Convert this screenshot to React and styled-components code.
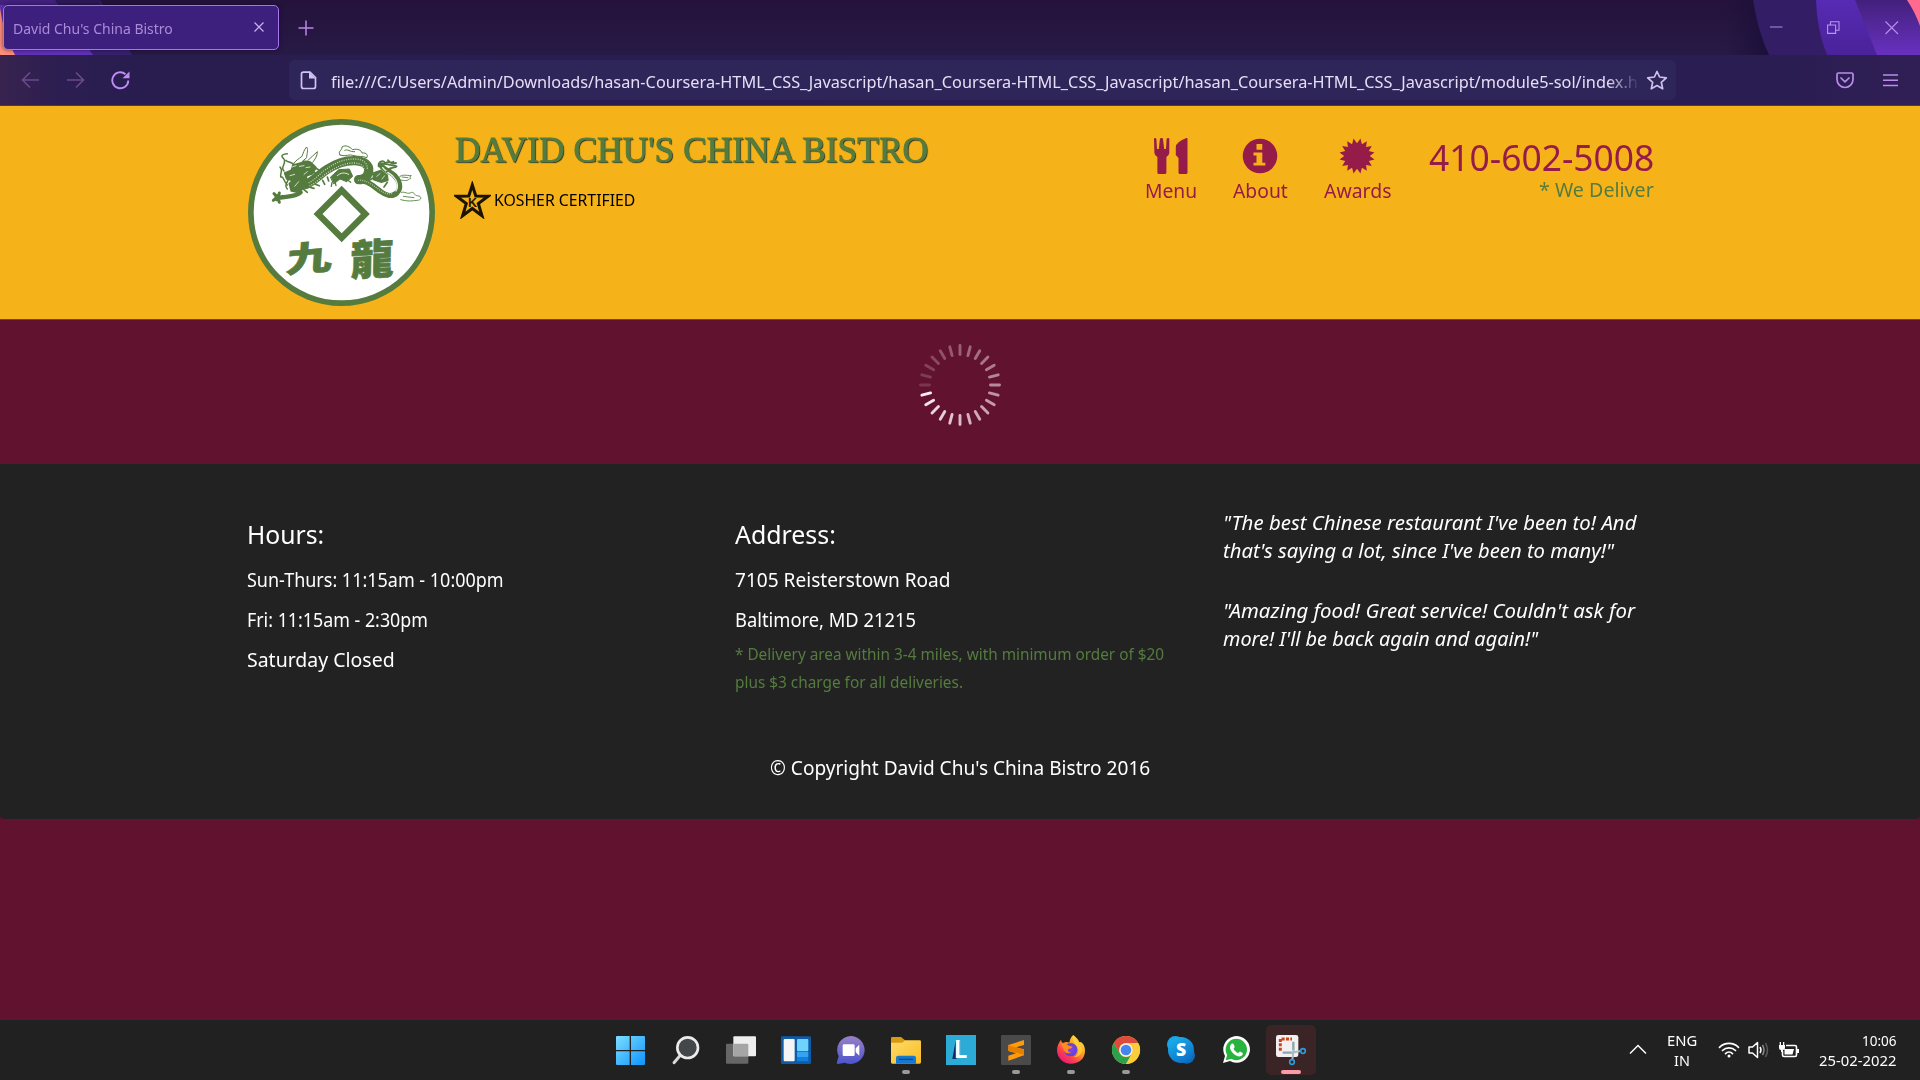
import React, { useLayoutEffect, useRef, useState } from "react";
import styled, { createGlobalStyle } from "styled-components";

const GlobalStyle = createGlobalStyle`
  * { box-sizing: border-box; }
  html, body { margin: 0; padding: 0; background: #61122f; }
  body { font-family: "Noto Sans", "Open Sans", sans-serif; overflow: hidden; }
  svg { display: block; }
`;

/* ---------- text set to a given measure ---------- */
const FitBox = styled.span`
  display: inline-block;
  flex: none;
  width: ${(p) => p.$w}px;
  white-space: nowrap;
`;
const FitText = styled.span`
  display: inline-block;
  transform-origin: 0 50%;
`;
function Fit({ w, children }) {
  const ref = useRef(null);
  const [k, setK] = useState(1);
  useLayoutEffect(() => {
    setK(w / ref.current.offsetWidth);
  }, [w]);
  return (
    <FitBox $w={w}>
      <FitText ref={ref} style={{ transform: `scaleX(${k})` }}>{children}</FitText>
    </FitBox>
  );
}

const Screen = styled.div`
  width: 1920px;
  height: 1080px;
  display: flex;
  flex-direction: column;
  background: #61122f;
  overflow: hidden;
`;

/* ---------- browser chrome ---------- */
const TitleBar = styled.div`
  position: relative;
  height: 55px;
  flex: none;
  display: flex;
  align-items: flex-start;
  padding: 5px 21px 0 3px;
  background: linear-gradient(#24123a, #271a46);
`;
const ThemeArt = styled.svg`
  position: absolute;
  top: 0;
  ${(p) => p.$side}: 0;
`;
const Tab = styled.div`
  position: relative;
  width: 276px;
  height: 45px;
  display: flex;
  align-items: center;
  justify-content: space-between;
  padding: 0 13px 0 9px;
  border: 1px solid #a775ea;
  border-radius: 5px;
  background: #3d207d;
  color: #ab8bd8;
  font-size: 15.3px;
  box-shadow: 0 0 4px rgba(15, 5, 40, 0.6);
`;
const TabClose = styled.svg`
  margin-bottom: 1px;
`;
const NewTab = styled.div`
  position: relative;
  margin: 15px 0 0 18.5px;
`;
const WindowButtons = styled.div`
  position: relative;
  display: flex;
  align-items: center;
  gap: 44px;
  height: 44px;
  margin-left: auto;
`;
const Toolbar = styled.div`
  height: 51px;
  flex: none;
  display: flex;
  align-items: center;
  padding: 0 21px;
  background: linear-gradient(90deg, #38234e 0, #2c1e51 60px, #291d50 130px, #2a1d52 1780px, #301f55 1920px);
  border-bottom: 1px solid #493a58;
`;
const NavButtons = styled.div`
  display: flex;
  gap: 26px;
  width: 268px;
`;
const UrlBar = styled.div`
  width: 1387px;
  height: 40px;
  display: flex;
  align-items: center;
  padding: 0 8px 0 11px;
  border-radius: 5px;
  background: #2e2559;
`;
const Url = styled.div`
  width: 1310px;
  margin: 0 auto 0 14px;
  padding-top: 4px;
  overflow: hidden;
  white-space: nowrap;
  font-size: 16.3px;
  line-height: 28px;
  color: #e6def6;
  mask-image: linear-gradient(90deg, #000 1276px, transparent 1309px);
`;
const ToolbarEnd = styled.div`
  display: flex;
  align-items: center;
  gap: 28px;
  margin-left: auto;
`;

/* ---------- site header ---------- */
const Header = styled.header`
  height: 214px;
  flex: none;
  display: flex;
  align-items: flex-start;
  padding: 0 266px 0 248px;
  background: #f6b319;
  border-bottom: 1px solid #8a3d1c;
`;
const Logo = styled.svg`
  width: 187px;
  height: 187px;
  margin-top: 13px;
`;
const Brand = styled.div`
  margin: 24px 0 0 18.5px;
`;
const BrandName = styled.h1`
  margin: 0 0 10px 1px;
  font: normal 35.8px/40px "Liberation Serif", serif;
  color: #557c3e;
  -webkit-text-stroke: 0.9px #557c3e;
  text-shadow: 1px 1px 1px #222;
`;
const Kosher = styled.div`
  display: flex;
  align-items: center;
  gap: 3px;
  height: 40px;
  font-size: 16px;
  color: #000;
`;
const SiteNav = styled.nav`
  display: flex;
  gap: 36px;
  margin: 32px 0 0 auto;
`;
const NavItem = styled.a`
  display: flex;
  flex-direction: column;
  align-items: center;
  gap: 3px;
  font-size: 20px;
  line-height: 28px;
  color: #951c49;
`;
const Phone = styled.div`
  display: flex;
  flex-direction: column;
  align-items: flex-end;
  margin: 32px 0 0 38.5px;
  font-size: 36.5px;
  line-height: 38px;
  color: #951c49;
`;
const Deliver = styled.div`
  font-size: 20px;
  line-height: 28px;
  color: #557c3e;
`;

/* ---------- main and footer ---------- */
const Main = styled.main`
  height: 144px;
  flex: none;
  display: flex;
  justify-content: center;
  padding-top: 22px;
`;
const Footer = styled.footer`
  height: 355px;
  flex: none;
  background: #222;
  color: #fff;
  border-radius: 0 0 4px 4px;
  font-size: 20px;
`;
const Columns = styled.div`
  display: grid;
  grid-template-columns: 488px 488px 488px;
  height: 284px;
  padding-left: 246.5px;
`;
const Column = styled.section`
  padding-top: ${(p) => p.$top}px;
`;
const Heading = styled.h4`
  margin: 0 0 6.5px;
  font-size: 26px;
  font-weight: 400;
  line-height: 40px;
`;
const Row = styled.div`
  line-height: 40px;
  height: 40px;
`;
const Note = styled.div`
  height: 28px;
  font-size: 16px;
  line-height: 28px;
  color: #557c3e;
`;
const Quote = styled.p`
  margin: 0 0 32px;
  font-style: italic;
  line-height: 28px;
`;
const Copyright = styled.div`
  text-align: center;
  line-height: 40px;
`;

/* ---------- taskbar ---------- */
const Taskbar = styled.div`
  height: 60px;
  flex: none;
  margin-top: auto;
  display: flex;
  padding: 0 25px 0 603px;
  background: #212121;
  color: #fff;
`;
const Slot = styled.div`
  width: 55px;
  height: 60px;
  display: flex;
  justify-content: center;
  padding-top: 5px;
`;
const SlotPlate = styled.div`
  width: 50px;
  height: 50px;
  display: flex;
  flex-direction: column;
  align-items: center;
  justify-content: space-between;
  padding: 10px 0 1px;
  border-radius: 5px;
  background: ${(p) => (p.$active ? "#3b2426" : "transparent")};
`;
const Indicator = styled.div`
  width: ${(p) => (p.$state === "active" ? 20 : 8)}px;
  height: 4px;
  border-radius: 2px;
  background: ${(p) => (p.$state === "active" ? "#f99ba7" : p.$state ? "#999" : "transparent")};
`;
const Tray = styled.div`
  display: flex;
  align-items: center;
  margin-left: auto;
  padding-bottom: 1px;
  font-size: 15.3px;
  line-height: 20px;
`;
const TrayText = styled.div`
  display: flex;
  flex-direction: column;
  align-items: ${(p) => p.$align};
  margin: 0 ${(p) => p.$gap}px 0 ${(p) => p.$before}px;
`;
const TrayIcons = styled.div`
  display: flex;
  gap: 8px;
  align-items: center;
`;

/* ---------- drawings ---------- */
const G = "#557c3e";

function Dragon() {
  return (
    <g fill="none" stroke={G} strokeLinecap="round" strokeLinejoin="round">
      <path d="M228 238C252 228 268 208 290 194C316 177 343 166 374 167C402 168 419 180 416 198C414 214 402 224 386 224" strokeWidth="28" />
      <path d="M236 234C256 224 272 202 292 190C318 172 345 161 374 162C400 162 414 176 412 194" stroke="#c5d5bb" strokeWidth="4" strokeDasharray="3 4" strokeLinecap="butt" />
      <path d="M238 244C262 232 276 212 298 200C322 184 348 173 374 174C394 175 404 184 402 196" stroke="#c5d5bb" strokeWidth="4" strokeDasharray="3 4" strokeLinecap="butt" />
      <path d="M382 228C408 222 430 244 450 258C468 272 488 276 500 264C516 248 508 226 492 210C478 198 462 194 454 182" strokeWidth="16" />
      <path d="M384 226C408 222 430 242 450 256C464 266 478 270 488 264" stroke="#c5d5bb" strokeWidth="4" strokeDasharray="2.5 4" strokeLinecap="butt" />
      <path d="M498 258C506 244 502 228 489 214C477 203 464 198 458 188" strokeWidth="4" stroke="#e8efe4" />
      <path d="M302 216L326 194L358 192L368 214L350 230L330 222L312 236Z" fill={G} strokeWidth="3" />
      <path d="M306 232L304 244M316 234L318 242M352 224L362 232" strokeWidth="4" />
      <path d="M322 212C332 202 344 202 356 208" stroke="#fff" strokeWidth="2.5" />
      <path d="M430 204L452 196L472 210L474 226L454 232L430 224Z" fill={G} strokeWidth="4" />
      <path d="M436 212L424 206M470 200L482 192M472 232L462 246M428 220L418 226" strokeWidth="5" />
      <path d="M440 214L450 206M456 222L464 212" stroke="#fff" strokeWidth="2" />
      <path d="M164 204L184 196L190 176L210 168L240 170L258 188L248 206L230 212L226 244L206 262L184 258L178 236L188 226L170 222Z" fill={G} strokeWidth="5" />
      <path d="M186 186L198 182M208 184L222 182M180 212L194 208M206 230L194 244M228 188L240 186M232 200L222 208" stroke="#fff" strokeWidth="2.2" />
      <path d="M190 178C196 166 206 162 216 154C220 144 222 134 230 126C236 136 230 146 230 158L216 170" strokeWidth="3" fill="#fff" />
      <path d="M234 166C244 158 252 148 262 140C262 152 256 162 248 172" strokeWidth="3" fill="#fff" />
      <path d="M162 198C148 186 174 174 160 160C150 152 160 146 172 146M150 186C160 196 150 204 152 216C162 212 160 230 172 240M174 226C168 238 164 244 172 252M188 176C180 170 172 172 168 166" strokeWidth="4.5" />
      <path d="M212 262C196 276 172 274 150 278L140 274" strokeWidth="13" />
      <path d="M132 266L142 276L130 286M148 264L144 280L148 292M158 274L140 284" strokeWidth="9" />
      <path d="M254 188L266 194M252 202L262 208M236 246L252 250M256 238L268 242M278 226L284 238M292 216L296 228M220 252L232 262" strokeWidth="5" />
      <path d="M330 150C322 138 336 138 336 126C346 118 360 126 368 134C384 130 394 136 396 144C410 142 416 152 410 158M330 150C350 156 356 146 372 152C386 156 398 152 410 158M344 136C352 130 360 142 374 140" strokeWidth="3" />
      <path d="M446 184C444 170 458 164 466 174C476 168 486 176 490 170M456 176C470 178 486 180 500 184C494 190 484 186 474 194M474 166C480 176 490 176 498 174" strokeWidth="5.5" />
      <path d="M506 218C514 206 530 212 544 212C534 214 548 222 538 222C530 230 518 226 508 224M516 216L534 218" strokeWidth="2.6" />
      <path d="M514 262C524 258 534 270 544 262C556 262 552 272 562 272C578 274 574 286 562 286C546 288 532 290 512 284M520 274L552 278" strokeWidth="2.6" />
    </g>
  );
}

function LogoArt() {
  return (
    <Logo viewBox="54 42 561 561">
      <circle cx="334.5" cy="322.5" r="272" fill="#fff" stroke={G} strokeWidth="17" />
      <Dragon />
      <path d="M335 256L406 327L335 398L264 327Z" fill="#fff" stroke={G} strokeWidth="19" />
      <g fill={G} stroke={G} strokeWidth="2" strokeLinejoin="round" fontFamily='"Noto Sans CJK TC", sans-serif' fontWeight="800">
        <text transform="translate(166 503) rotate(-5) skewX(-9) scale(1.1 .82)" fontSize="126">九</text>
        <text transform="translate(361 512) rotate(-3) skewX(-4) scale(1.05 1.01)" fontSize="124">龍</text>
      </g>
    </Logo>
  );
}

function KosherStar() {
  return (
    <svg width="37" height="38" viewBox="0 0 37 38">
      <path d="M18.3 4L21.8 15L34 15.300L24.3 22.5L28 34.8L18.3 27.5L8.6 34.8L12.3 22.500L2.6 15.300L14.8 15Z" fill="none" stroke="#1c1400" strokeWidth="3" />
      <text x="18.6" y="26" fontFamily='"Liberation Sans", sans-serif' fontWeight="bold" fontSize="12.500" textAnchor="middle" fill="#1c1400">K</text>
    </svg>
  );
}

const NAV_RED = "#951c49";
const CutleryIcon = () => (
  <svg width="34" height="36" viewBox="0 0 34 36" fill={NAV_RED}>
    <path d="M0 1Q0 0 1 0T2.4 1L3 11H4.800L5.900 1Q6 0 7.500 0T9 1L10.200 11H12L12.600 1Q13 0 14.200 0T15.300 1V15Q15.300 17 12.400 19V34.500Q12.400 36 11 36H4.800Q3.400 36 3.400 34.500V19Q.4 17 .4 15Z" />
    <path d="M33.500 .8V34.500Q33.500 36 32 36H26Q24.500 36 24.500 34.500V20L21.800 17V9Q22 4 32.400 0Q33.500 -.2 33.500 .8Z" />
  </svg>
);
const InfoIcon = () => (
  <svg width="36" height="36" viewBox="0 0 36 36">
    <circle cx="18" cy="18" r="17.300" fill={NAV_RED} />
    <path d="M14.500 6H20.300V11.800H14.500ZM11.500 14.500H20.300V24.700H23.300V27.600H11.500V24.700H14.500V17.400H11.500Z" fill="#f6b319" />
  </svg>
);
const starburst = Array.from({ length: 32 }, (_, i) => {
  const a = ((i * 11.25 - 11.25) * Math.PI) / 180;
  const r = i % 2 ? 12.8 : 17.8;
  return `${(18 + r * Math.sin(a)).toFixed(2)},${(18 - r * Math.cos(a)).toFixed(2)}`;
}).join(" ");
const AwardIcon = () => (
  <svg width="36" height="36" viewBox="0 0 36 36">
    <polygon points={starburst} fill={NAV_RED} />
  </svg>
);

function Spinner() {
  return (
    <svg width="86" height="86" viewBox="-43 -43 86 86">
      {Array.from({ length: 24 }, (_, i) => (
        <line key={i} x1="-30.500" x2="-39.500" y1="0" y2="0" stroke="#ffeef6" strokeWidth="2.900" strokeLinecap="round"
          opacity={(1 - 0.84 * Math.pow(i / 23, 0.85)).toFixed(2)} transform={`rotate(${-15 - i * 15})`} />
      ))}
    </svg>
  );
}

const StartIcon = () => (
  <svg width="30" height="30" viewBox="2 0 90 90">
    <defs><linearGradient id="win" x1="0" y1="0" x2="90" y2="90" gradientUnits="userSpaceOnUse"><stop stopColor="#7fe0ff" /><stop offset="1" stopColor="#0d93ff" /></linearGradient></defs>
    <path fill="url(#win)" d="M5 3H43V45H2V6Q2 3 5 3ZM47 3H86Q89 3 89 6V45H47ZM2 49H43V90H5Q2 90 2 87ZM47 49H89V87Q89 90 86 90H47Z" />
  </svg>
);
const SearchIcon = () => (
  <svg width="30" height="30" viewBox="0 0 90 90">
    <path d="M28 61L9 83" stroke="#d9d9d9" strokeWidth="9" strokeLinecap="round" />
    <circle cx="50" cy="38" r="31" fill="#43474a" stroke="#ececec" strokeWidth="8" />
  </svg>
);
const TaskViewIcon = () => (
  <svg width="30" height="30" viewBox="0 0 90 90">
    <rect y="26" width="67" height="60" rx="3" fill="#666" />
    <rect x="22" y="4" width="68" height="60" rx="3" fill="#eee" />
    <path d="M22 26H64Q67 26 67 29V64H22Z" fill="#a5a5a5" />
  </svg>
);
const WidgetsIcon = () => (
  <svg width="30" height="30" viewBox="0 0 90 90">
    <rect y="4" width="90" height="83" rx="4" fill="#0e5ba8" />
    <rect x="8" y="12" width="33" height="67" rx="3" fill="#f5f5f5" />
    <rect x="48" y="12" width="34" height="37" rx="3" fill="#6fd3fb" />
    <rect x="48" y="51" width="34" height="15" fill="#36a3f0" />
    <rect x="48" y="66" width="34" height="13" rx="2" fill="#0f7fe0" />
  </svg>
);
const ChatIcon = () => (
  <svg width="30" height="30" viewBox="0 0 90 90">
    <defs><linearGradient id="chat" x1="0" y1="0" x2="0" y2="1"><stop stopColor="#9a80c8" /><stop offset="1" stopColor="#4b55cc" /></linearGradient></defs>
    <path d="M46 3A42 42 0 1 1 26 83L6 87Q1 87 3 81L8 64A42 42 0 0 1 46 3Z" fill="url(#chat)" />
    <rect x="20" y="28" width="36" height="35" rx="4" fill="#fff" />
    <path d="M59 40L70 29V62L59 52Z" fill="#fff" />
  </svg>
);
const ExplorerIcon = () => (
  <svg width="30" height="30" viewBox="0 0 90 90">
    <defs><linearGradient id="fold" x1="0" y1="0" x2="1" y2="1"><stop stopColor="#ffdb6b" /><stop offset="1" stopColor="#f8bc22" /></linearGradient></defs>
    <path d="M0 10Q0 6 4 6H30L42 16V30H0Z" fill="#d79b12" />
    <path d="M0 23H34L42 16H86Q90 16 90 20V82Q90 86 86 86H4Q0 86 0 82Z" fill="url(#fold)" />
    <path d="M15 86V69Q15 62 22 62H68Q75 62 75 69V86Z" fill="#1479cf" />
    <path d="M24 73H66" stroke="#0b4a8c" strokeWidth="4" />
  </svg>
);
const LIcon = () => (
  <svg width="30" height="30" viewBox="0 0 90 90" overflow="visible">
    <rect width="90" height="90" fill="#2babd6" />
    <path d="M29 17L19 72L31 71L42 62V17Z" fill="#15215e" />
    <text x="24" y="70" fontFamily="Lato, sans-serif" fontWeight="900" fontSize="74" fill="#fff">L</text>
  </svg>
);
const SublimeIcon = () => (
  <svg width="30" height="30" viewBox="0 0 90 90">
    <rect width="90" height="90" rx="4" fill="#4a4a4a" />
    <path d="M69 15L22 30V48L45 55L22 62V77L69 61V43L45 37L69 30Z" fill="#ff9a0a" />
    <path d="M22 31L69 44V59L22 47Z" fill="#e67f00" />
  </svg>
);
const FirefoxIcon = () => (
  <svg width="30" height="30" viewBox="0 0 90 90">
    <defs>
      <linearGradient id="ff" x1="1" y1="0" x2=".2" y2="1"><stop offset=".1" stopColor="#fff04a" /><stop offset=".45" stopColor="#ff9a24" /><stop offset=".75" stopColor="#ff3b4e" /><stop offset="1" stopColor="#e31587" /></linearGradient>
      <radialGradient id="ffg"><stop stopColor="#8d3ff0" /><stop offset="1" stopColor="#5b45d6" /></radialGradient>
    </defs>
    <path d="M52 0C62 8 68 14 70 22C76 18 87 30 87 47C87 71 68 86 45 86C21 86 3 69 3 45C3 33 8 24 15 14C16 20 18 22 21 24C28 20 34 20 40 23C42 12 46 4 52 0Z" fill="url(#ff)" />
    <circle cx="44" cy="44" r="20" fill="url(#ffg)" />
    <path d="M15 26C24 24 31 26 38 32L50 35C48 41 40 40 37 43C33 48 38 53 46 51C35 60 24 53 22 42Z" fill="#ff8a1e" />
    <path d="M52 4C48 20 60 28 66 38C70 52 62 64 52 66C66 68 78 58 78 44C76 26 58 20 52 4Z" fill="#ffd83a" opacity=".75" />
  </svg>
);
const ChromeIcon = () => (
  <svg width="30" height="30" viewBox="-45 -45 90 90">
    <circle r="42" fill="#fbc931" />
    <path d="M-36.400 -21A42 42 0 0 1 36.400 -21H0A21 21 0 0 0 -18.200 10.500Z" fill="#de4a3c" />
    <path d="M-36.400 -21A42 42 0 0 0 0 42L18.200 10.500A21 21 0 0 1 -18.200 10.500Z" fill="#2da04e" />
    <path d="M36.400 -21A42 42 0 0 1 0 42L18.200 10.500A21 21 0 0 0 12 -21Z" fill="#fbcd3a" />
    <circle r="20" fill="#f4f4f4" />
    <circle r="16" fill="#4684ee" />
  </svg>
);
const SkypeIcon = () => (
  <svg width="30" height="30" viewBox="0 0 90 90">
    <defs><linearGradient id="sky" x1="0" y1="0" x2=".6" y2="1"><stop stopColor="#1fb5ee" /><stop offset="1" stopColor="#0a72c9" /></linearGradient></defs>
    <circle cx="28" cy="28" r="25" fill="#17a6e8" /><circle cx="62" cy="61" r="25" fill="#1068bd" />
    <circle cx="45" cy="45" r="39" fill="url(#sky)" />
    <text x="45" y="63" textAnchor="middle" fontFamily='"Open Sans", sans-serif' fontWeight="800" fontSize="53" fill="#fff">S</text>
  </svg>
);
const WhatsAppIcon = () => (
  <svg width="30" height="30" viewBox="0 0 90 90">
    <path d="M6 84L12 63A40 40 0 1 1 27 78Z" fill="#fff" />
    <circle cx="46" cy="43.500" r="32" fill="#27b43e" />
    <path d="M14 76L19 58L32 71Z" fill="#27b43e" />
    <path d="M31 27C34 24 37 25 38 28L41 35C41 38 37 39 38 42C42 49 46 52 51 54C54 54 55 49 58 50L65 54C67 56 64 63 58 64C44 66 25 47 27 35Q28 30 31 27Z" fill="#fff" />
  </svg>
);
const SnipIcon = () => (
  <svg width="30" height="30" viewBox="0 0 90 90" overflow="visible">
    <rect x="0" y="0" width="67" height="66" rx="7" fill="#f2f0f0" />
    <path d="M13 47V12H48" fill="none" stroke="#c8451c" strokeWidth="9" strokeDasharray="9 4" />
    <path d="M52 20V46M20 53H50" stroke="#8fa4ac" strokeWidth="7" />
    <path d="M53 44L49 74M46 53L74 48" stroke="#a9bcc4" strokeWidth="6" />
    <g fill="none" stroke="#2d9ad8" strokeWidth="5"><circle cx="81" cy="48" r="7" /><circle cx="48" cy="81" r="7" /></g>
  </svg>
);

const APPS = [
  [StartIcon], [SearchIcon], [TaskViewIcon], [WidgetsIcon], [ChatIcon],
  [ExplorerIcon, "open"], [LIcon], [SublimeIcon, "open"], [FirefoxIcon, "open"],
  [ChromeIcon, "open"], [SkypeIcon], [WhatsAppIcon], [SnipIcon, "active"],
];

const URL_TEXT =
  "file:///C:/Users/Admin/Downloads/hasan-Coursera-HTML_CSS_Javascript/hasan_Coursera-HTML_CSS_Javascript/hasan_Coursera-HTML_CSS_Javascript/module5-sol/index.h";

function BrowserChrome() {
  return (
    <>
      <TitleBar>
        <ThemeArt $side="left" width="140" height="55">
          <path d="M0 0H100L132 55H0Z" fill="#38206f" />
          <path d="M0 0H55L93 55H0Z" fill="#6131b8" />
          <path d="M0 0H100V5H0Z" fill="#1f1038" opacity=".45" />
          <path d="M0 8Q4 35 15 55H0Z" fill="#ff8e7c" />
        </ThemeArt>
        <ThemeArt $side="right" width="220" height="55">
          <defs>
            <linearGradient id="sh" x1="0" x2="1"><stop stopColor="#1c0f3a" stopOpacity="0" /><stop offset="1" stopColor="#190e38" /></linearGradient>
            <linearGradient id="b1" x1="0" y1="0" x2="0" y2="1"><stop stopColor="#572bb4" /><stop offset="1" stopColor="#4a2299" /></linearGradient>
            <linearGradient id="b2" x1="0" y1="0" x2="0" y2="1"><stop stopColor="#43207c" /><stop offset="1" stopColor="#6831c0" /></linearGradient>
          </defs>
          <path d="M25 0H60L74 55H25Z" fill="url(#sh)" />
          <path d="M53 0Q58 32 69 55H220V0Z" fill="#331e66" />
          <path d="M116 0Q117 30 127 55H220V0Z" fill="url(#b1)" />
          <path d="M155 0L177 55H220V0Z" fill="url(#b2)" />
          <path d="M207 0Q215 12 220 26V0Z" fill="#ff6b8e" />
        </ThemeArt>
        <Tab>
          <Fit w={160}>David Chu's China Bistro</Fit>
          <TabClose width="12" height="12" viewBox="0 0 12 12"><path d="M1.500 1.500L10.500 10.500M10.500 1.500L1.500 10.500" stroke="#c9b3ee" strokeWidth="1.200" /></TabClose>
        </Tab>
        <NewTab>
          <svg width="16" height="16" viewBox="0 0 16 16"><path d="M8 .5V15.500M.5 8H15.500" stroke="#bd87ea" strokeWidth="1.500" /></svg>
        </NewTab>
        <WindowButtons>
          <svg width="13" height="13"><path d="M0 6H12.500" stroke="#9a78cf" strokeWidth="1.200" /></svg>
          <svg width="13" height="13" fill="none" stroke="#b696ee" strokeWidth="1.100"><path d="M.6 4H8.600V12.400H.6ZM3.500 4V.7H12V9.200H8.600" /></svg>
          <svg width="15" height="15"><path d="M1.500 1.500L14 14M14 1.500L1.500 14" stroke="#b58bea" strokeWidth="1.200" /></svg>
        </WindowButtons>
      </TitleBar>
      <Toolbar>
        <NavButtons>
          <svg width="19" height="18" viewBox="0 0 19 18" fill="none" stroke="#6b4a8d" strokeWidth="1.600"><path d="M18 9H1.500M9 1.500L1.500 9L9 16.500" /></svg>
          <svg width="19" height="18" viewBox="0 0 19 18" fill="none" stroke="#6b4a8d" strokeWidth="1.600"><path d="M1 9H17.500M10 1.500L17.500 9L10 16.500" /></svg>
          <svg width="20" height="19" viewBox="0 0 20 19"><path d="M14.500 3.200A8 8 0 1 0 17.300 9.500" fill="none" stroke="#bd8df5" strokeWidth="1.900" /><path d="M18.500 .5V7.300H11.500Z" fill="#bd8df5" /></svg>
        </NavButtons>
        <UrlBar>
          <svg width="17" height="19" viewBox="0 0 17 19"><path d="M3.500 1.200H10L15.500 6.500V15.500Q15.500 17.500 13.500 17.500H3.500Q1.500 17.500 1.500 15.500V3.200Q1.500 1.200 3.500 1.200Z" fill="none" stroke="#d3c3f3" strokeWidth="1.700" /><path d="M9 1V7.500H15.500Z" fill="#d3c3f3" /></svg>
          <Url>{URL_TEXT}</Url>
          <svg width="22" height="21" viewBox="0 0 22 21"><path d="M11 1.500L13.600 7L20.300 7.900L15.300 12.300L16.700 18.800L11 15.600L5.300 18.800L6.700 12.300L1.700 7.900L8.400 7Z" fill="none" stroke="#cfc1ee" strokeWidth="1.700" strokeLinejoin="round" /></svg>
        </UrlBar>
        <ToolbarEnd>
          <svg width="18" height="17" viewBox="0 0 18 17" fill="none" stroke="#bb8ced" strokeWidth="1.700" strokeLinecap="round" strokeLinejoin="round"><path d="M2.500 1H15.500Q17 1 17 2.500V7.500A8 8 0 0 1 1 7.500V2.500Q1 1 2.500 1ZM5 6L9 9.800L13 6" /></svg>
          <svg width="17" height="14" viewBox="0 0 17 14"><path d="M1 2H16M1 7.200H16M1 12.500H16" stroke="#bb8ced" strokeWidth="1.500" /></svg>
        </ToolbarEnd>
      </Toolbar>
    </>
  );
}

export default function App() {
  return (
    <Screen>
      <GlobalStyle />
      <BrowserChrome />
      <Header>
        <LogoArt />
        <Brand>
          <BrandName><Fit w={473}>DAVID CHU'S CHINA BISTRO</Fit></BrandName>
          <Kosher>
            <KosherStar />
            <Fit w={141}>KOSHER CERTIFIED</Fit>
          </Kosher>
        </Brand>
        <SiteNav>
          <NavItem><CutleryIcon /><Fit w={52}>Menu</Fit></NavItem>
          <NavItem><InfoIcon /><Fit w={55}>About</Fit></NavItem>
          <NavItem><AwardIcon /><Fit w={67}>Awards</Fit></NavItem>
        </SiteNav>
        <Phone>
          <Fit w={225}>410-602-5008</Fit>
          <Deliver><Fit w={115}>* We Deliver</Fit></Deliver>
        </Phone>
      </Header>
      <Main><Spinner /></Main>
      <Footer>
        <Columns>
          <Column $top={49.5}>
            <Heading><Fit w={77}>Hours:</Fit></Heading>
            <Row><Fit w={257}>Sun-Thurs: 11:15am - 10:00pm</Fit></Row>
            <Row><Fit w={181}>Fri: 11:15am - 2:30pm</Fit></Row>
            <Row><Fit w={148}>Saturday Closed</Fit></Row>
          </Column>
          <Column $top={49.5}>
            <Heading><Fit w={100.500}>Address:</Fit></Heading>
            <Row><Fit w={215.500}>7105 Reisterstown Road</Fit></Row>
            <Row><Fit w={180.500}>Baltimore, MD 21215</Fit></Row>
            <Note><Fit w={429}>* Delivery area within 3-4 miles, with minimum order of $20</Fit></Note>
            <Note><Fit w={228.500}>plus $3 charge for all deliveries.</Fit></Note>
          </Column>
          <Column $top={44.5}>
            <Quote>
              <Fit w={413}>"The best Chinese restaurant I've been to! And</Fit>
              <Fit w={390.500}>that's saying a lot, since I've been to many!"</Fit>
            </Quote>
            <Quote>
              <Fit w={412.500}>"Amazing food! Great service! Couldn't ask for</Fit>
              <Fit w={315}>more! I'll be back again and again!"</Fit>
            </Quote>
          </Column>
        </Columns>
        <Copyright><Fit w={380.500}>© Copyright David Chu's China Bistro 2016</Fit></Copyright>
      </Footer>
      <Taskbar>
        {APPS.map(([Icon, state], i) => (
          <Slot key={i}>
            <SlotPlate $active={state === "active"}>
              <Icon />
              <Indicator $state={state} />
            </SlotPlate>
          </Slot>
        ))}
        <Tray>
          <svg width="18" height="11" viewBox="0 0 18 11"><path d="M1 9.500L9 1.500L17 9.500" fill="none" stroke="#fff" strokeWidth="1.500" /></svg>
          <TrayText $align="center" $gap={21} $before={20}>
            <Fit w={30}>ENG</Fit>
            <Fit w={16}>IN</Fit>
          </TrayText>
          <TrayIcons>
            <svg width="22" height="18" viewBox="0 0 22 18" fill="none" stroke="#fff" strokeWidth="1.700" strokeLinecap="round"><path d="M1.500 6.300A13.500 13.500 0 0 1 20.500 6.300M4.500 9.500A9.200 9.200 0 0 1 17.500 9.500M7.500 12.600A5 5 0 0 1 14.500 12.600" /><circle cx="11" cy="15" r="1.500" fill="#fff" stroke="none" /></svg>
            <svg width="22" height="18" viewBox="0 0 22 18" fill="none" stroke="#fff" strokeWidth="1.500" strokeLinejoin="round"><path d="M1 6H4.500L9.500 1.500V16.500L4.500 12H1Z" /><path d="M12 6Q14 9 12 12" /><path d="M14.500 4Q17.500 9 14.500 14" stroke="#8a8a8a" /><path d="M17.500 2Q21.500 9 17.500 16" stroke="#5c5c5c" /></svg>
            <svg width="22" height="18" viewBox="0 0 22 18"><path d="M8 4.500H17Q18.500 4.500 18.500 6V14Q18.500 15.500 17 15.500H6Q4.500 15.500 4.500 14V10" fill="none" stroke="#fff" strokeWidth="1.600" /><path d="M6.500 13.500V8H16L14.500 13.500ZM19 8H21V12H19ZM1 4H7V7Q7 9 5 9V11H3V9Q1 9 1 7ZM1.700 1H3V4H1.700ZM5 1H6.300V4H5Z" fill="#fff" /></svg>
          </TrayIcons>
          <TrayText $align="flex-end" $gap={-1} $before={19}>
            <Fit w={34.500}>10:06</Fit>
            <Fit w={77.500}>25-02-2022</Fit>
          </TrayText>
        </Tray>
      </Taskbar>
    </Screen>
  );
}
